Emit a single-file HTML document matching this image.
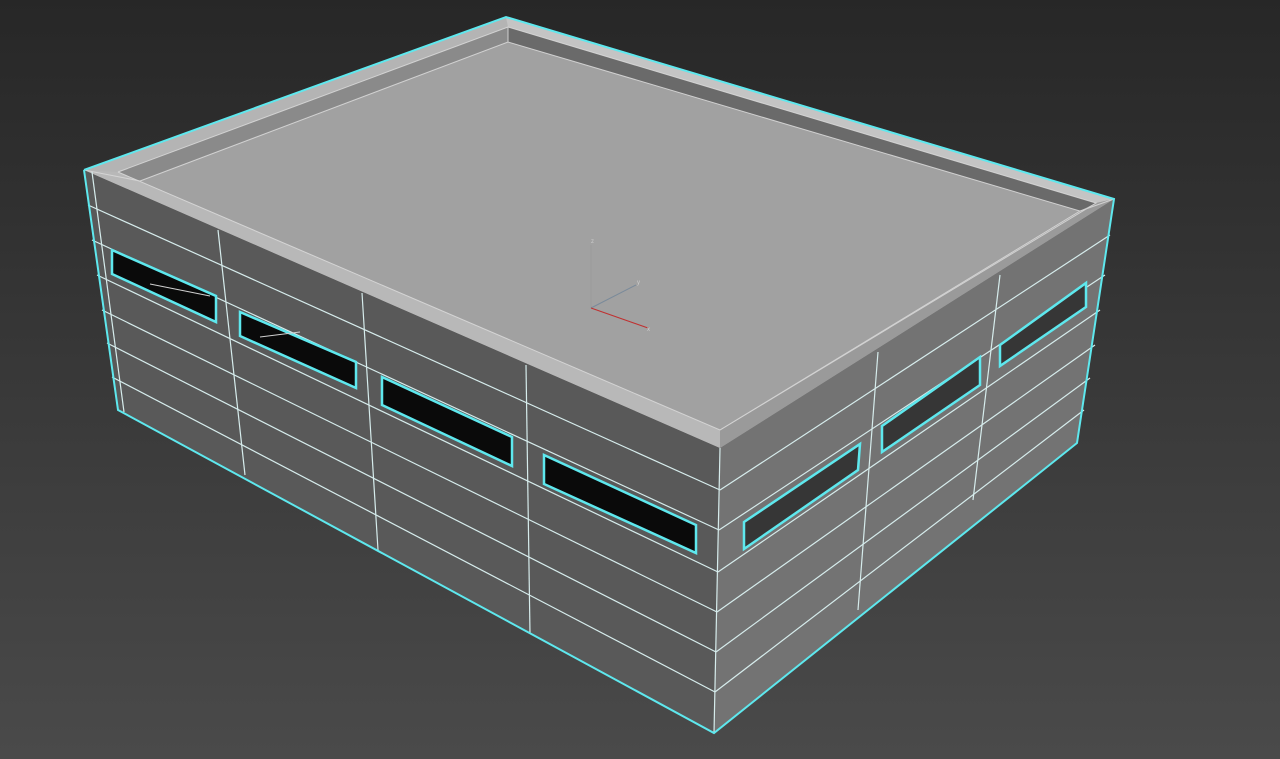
<!DOCTYPE html>
<html><head><meta charset="utf-8"><style>
html,body{margin:0;padding:0;width:1280px;height:759px;overflow:hidden;background:#333}
svg{display:block}
</style></head><body>
<svg width="1280" height="759" viewBox="0 0 1280 759" xmlns="http://www.w3.org/2000/svg">
<defs>
<linearGradient id="bg" x1="0" y1="0" x2="0" y2="1">
<stop offset="0" stop-color="#272727"/><stop offset="1" stop-color="#4a4a4a"/>
</linearGradient>
</defs>
<rect width="1280" height="759" fill="url(#bg)"/>
<!-- walls -->
<polygon points="84,170 720,448 714,733 118,410" fill="#595959"/>
<polygon points="720,448 1114,199 1077,443 714,733" fill="#737373"/>
<!-- roof parapet -->
<polygon points="506,17 84,170 720,448 1114,199" fill="#b4b4b4"/>
<polygon points="506,17 1114,199 1096,203 508,27" fill="#c4c4c4"/>
<polygon points="508,27 118,172 140,181 508,42" fill="#8a8a8a"/>
<polygon points="508,27 1096,203 1080,211 508,42" fill="#6a6a6a"/>
<polygon points="140,181 720,430 1080,211 508,42" fill="#a1a1a1"/>
<polygon points="84,170 118,172 140,181 720,430 720,448" fill="#b8b8b8"/>
<polygon points="720,448 720,430 1080,211 1096,203 1114,199" fill="#9a9a9a"/>
<g stroke="#d8d8d8" stroke-width="1" fill="none" opacity="0.9">
<polyline points="118,172 508,27 1096,203 720,430 118,172"/>
<polyline points="140,181 508,42 1080,211 720,430"/>
<line x1="508" y1="27" x2="508" y2="42"/>
<line x1="84" y1="170" x2="140" y2="181"/>
<line x1="1114" y1="199" x2="1080" y2="211"/>
</g>
<!-- horizontal bands -->
<g stroke="#d6ecec" stroke-width="1.2" fill="none">
<line x1="88" y1="205" x2="720" y2="490"/>
<line x1="92" y1="240" x2="719" y2="530"/>
<line x1="97" y1="275" x2="718" y2="572"/>
<line x1="102" y1="310" x2="717" y2="612"/>
<line x1="107" y1="343" x2="716" y2="652"/>
<line x1="112" y1="377" x2="715" y2="692"/>
<line x1="720" y1="490" x2="1110" y2="235"/>
<line x1="719" y1="530" x2="1105" y2="275"/>
<line x1="718" y1="572" x2="1100" y2="310"/>
<line x1="717" y1="612" x2="1095" y2="345"/>
<line x1="716" y1="652" x2="1090" y2="378"/>
<line x1="715" y1="692" x2="1084" y2="410"/>
<line x1="218" y1="230" x2="245" y2="475"/>
<line x1="362" y1="293" x2="378" y2="550"/>
<line x1="526" y1="365" x2="530" y2="634"/>
<line x1="878" y1="352" x2="858" y2="610"/>
<line x1="1000" y1="275" x2="973" y2="500"/>
<line x1="720" y1="448" x2="714" y2="733"/>
<line x1="92" y1="172" x2="124" y2="412"/>
</g>
<!-- windows -->
<g fill="#0a0a0a" stroke="#5ee8ee" stroke-width="2.5">
<polygon points="112,250 216,296 216,322 112,274"/>
<polygon points="240,312 356,362 356,388 240,336"/>
<polygon points="382,377 512,437 512,466 382,405"/>
<polygon points="544,455 696,525 696,553 544,484"/>
</g>
<g fill="#363636" stroke="#5ee8ee" stroke-width="2.5">
<polygon points="744,522 860,444 858,470 744,549"/>
<polygon points="882,426 980,357 980,385 882,452"/>
<polygon points="1000,345 1086,283 1086,307 1000,366"/>
</g>
<g stroke="#d0d0d0" stroke-width="1">
<line x1="150" y1="284" x2="210" y2="296"/>
<line x1="260" y1="337" x2="300" y2="332"/>
</g>
<!-- outline -->
<g stroke="#5ee8ee" stroke-width="2" fill="none">
<polyline points="84,170 506,17 1114,199 1077,443 714,733 118,410 84,170"/>
</g>
<!-- gizmo -->
<line x1="591" y1="245" x2="591" y2="308" stroke="#9a9a9a" stroke-width="1"/>
<line x1="591" y1="308" x2="636" y2="285" stroke="#7a8a9a" stroke-width="1"/>
<line x1="591" y1="308" x2="648" y2="328" stroke="#c03030" stroke-width="1"/>
<text x="591" y="243" font-family="Liberation Sans, sans-serif" font-size="6" fill="#ccc">z</text>
<text x="637" y="284" font-family="Liberation Sans, sans-serif" font-size="6" fill="#ccc">y</text>
<text x="647" y="331" font-family="Liberation Sans, sans-serif" font-size="6" fill="#ccc">x</text>
</svg>
</body></html>
